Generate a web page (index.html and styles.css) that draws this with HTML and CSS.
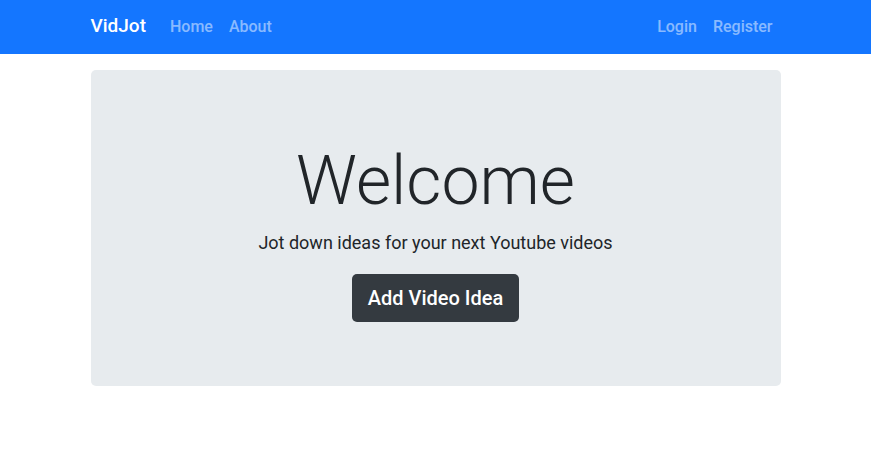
FILE: index.html
```html
<!DOCTYPE html>
<html lang="en">
<head>
<meta charset="utf-8">
<meta name="viewport" content="width=device-width, initial-scale=1">
<title>VidJot</title>
<link rel="stylesheet" href="styles.css">
</head>
<body>
<nav class="navbar">
  <div class="container navbar-inner">
    <a class="brand" href="#">VidJot</a>
    <div class="nav-group">
      <a class="nav-link" href="#">Home</a>
      <a class="nav-link" href="#">About</a>
    </div>
    <div class="nav-group nav-end">
      <a class="nav-link" href="#">Login</a>
      <a class="nav-link" href="#">Register</a>
    </div>
  </div>
</nav>
<main class="container">
  <section class="jumbotron">
    <h1 class="title">Welcome</h1>
    <p class="lead">Jot down ideas for your next Youtube videos</p>
    <a class="btn" href="#">Add Video Idea</a>
  </section>
</main>
</body>
</html>
```
FILE: styles.css
```css
* {
  box-sizing: border-box;
}

body {
  margin: 0;
  background: #fff;
  color: #212529;
  font-family: Roboto, "Liberation Sans", sans-serif;
  font-size: 16px;
  line-height: 24px;
}

a {
  text-decoration: none;
}

.container {
  width: 100%;
  max-width: 720px;
  margin: 0 auto;
  padding: 0 15px;
}

.navbar {
  margin-bottom: 16px;
  padding: 7px 0;
  background: #1476ff;
}

.navbar-inner {
  display: flex;
  align-items: baseline;
}

.brand {
  margin-right: 16px;
  color: #fff;
  font-size: 19px;
  font-weight: 500;
  line-height: 30px;
}

.nav-group {
  display: flex;
}

.nav-end {
  margin-left: auto;
}

.nav-link {
  padding: 8px;
  color: rgba(255, 255, 255, 0.5);
  font-weight: 500;
}

.jumbotron {
  padding: 64px 32px;
  border-radius: 5px;
  background: #e7ebee;
  text-align: center;
}

.title {
  margin: 0;
  font-size: 68px;
  font-weight: 300;
  line-height: 94px;
}

.lead {
  margin: 0 0 16px;
  font-size: 18px;
  font-weight: 400;
  line-height: 30px;
}

.btn {
  display: inline-block;
  padding: 9px 16px;
  border-radius: 5px;
  background: #343a40;
  color: #fff;
  font-size: 20px;
  font-weight: 500;
  line-height: 30px;
  vertical-align: middle;
}
```
